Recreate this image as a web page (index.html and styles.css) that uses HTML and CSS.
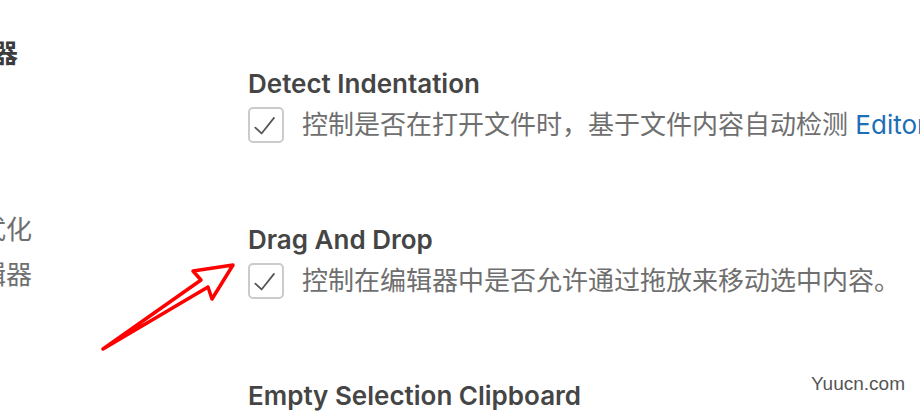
FILE: index.html
```html
<!DOCTYPE html>
<html lang="zh-CN">
<head>
    <meta charset="UTF-8">
    <title>设置 - 文本编辑器</title>
    <link rel="stylesheet" href="styles.css">
</head>
<body>
    <div class="page">
        <!-- table of contents, mostly off screen -->
        <nav class="toc">
            <div class="toc-item toc-active">文本编辑器</div>
            <div class="toc-item">格式化</div>
            <div class="toc-item">差异编辑器</div>
        </nav>

        <main class="settings">
            <div class="setting">
                <div class="setting-title">Detect Indentation</div>
                <div class="setting-row">
                    <span class="check">
                        <svg width="36" height="36" viewBox="0 0 36 36"><path d="M6 21 L13 27.5 L27 10" fill="none" stroke="#555" stroke-width="2" stroke-linecap="round" stroke-linejoin="round"/></svg>
                    </span>
                    <span class="setting-desc">控制是否在打开文件时，基于文件内容自动检测 <a href="#" class="link">Editor: Tab Size</a></span>
                </div>
            </div>

            <div class="setting">
                <div class="setting-title">Drag And Drop</div>
                <div class="setting-row">
                    <span class="check">
                        <svg width="36" height="36" viewBox="0 0 36 36"><path d="M6 21 L13 27.5 L27 10" fill="none" stroke="#555" stroke-width="2" stroke-linecap="round" stroke-linejoin="round"/></svg>
                    </span>
                    <span class="setting-desc">控制在编辑器中是否允许通过拖放来移动选中内容。</span>
                </div>
            </div>

            <div class="setting">
                <div class="setting-title">Empty Selection Clipboard</div>
            </div>
        </main>
    </div>

    <!-- annotation arrow drawn over the screenshot -->
    <svg class="arrow" width="150" height="100" viewBox="0 0 150 100">
        <polygon points="3,89 101,20 93,11 133,5 112,39 108,27" fill="none" stroke="#ff0000" stroke-width="3.5" stroke-linejoin="round"/>
    </svg>

    <div class="watermark">Yuucn.com</div>
</body>
</html>
```

FILE: styles.css
```css
body {
    margin: 0;
    background-color: #fff;
    font-family: Inter, "Noto Sans CJK SC", sans-serif;
    overflow: hidden;
    height: 416px;
    position: relative;
}

.page {
    display: flex;
    width: 920px;
}

/* TOC column, cut off by the left edge */
.toc {
    width: 160px;
    margin-left: -128px;
    padding-top: 29px;
    text-align: right;
    flex-shrink: 0;
}

.toc-item {
    font-family: "Noto Sans CJK SC", sans-serif;
    font-size: 26px;
    line-height: 45px;
    color: #6f6f6f;
}

.toc-active {
    font-weight: 700;
    color: #3c3c3c;
    margin-right: 14px;
    margin-bottom: 131px;
}

.settings {
    margin-left: 216px;
    padding-top: 66px;
    flex: 1;
    white-space: nowrap;
}

.setting {
    height: 156px;
}

.setting:last-child {
    height: auto;
}

.setting-title {
    font-size: 26px;
    font-weight: 600;
    line-height: 36px;
    color: #454545;
}

.setting-row {
    display: flex;
    align-items: center;
    gap: 18px;
    margin-top: 5px;
}

.check {
    width: 32px;
    height: 32px;
    border: 2px solid #cbcbcb;
    border-radius: 5px;
    display: flex;
    align-items: center;
    justify-content: center;
    flex-shrink: 0;
}

.check svg {
    display: block;
}

.setting-desc {
    font-size: 26px;
    color: #6f6f6f;
    line-height: 36px;
}

.link {
    color: #1b6fb8;
    text-decoration: none;
}

.arrow {
    position: absolute;
    left: 100px;
    top: 260px;
}

.watermark {
    position: absolute;
    left: 811px;
    top: 373px;
    font-family: "Liberation Sans", Arial, sans-serif;
    font-size: 19px;
    color: #555;
}
```
